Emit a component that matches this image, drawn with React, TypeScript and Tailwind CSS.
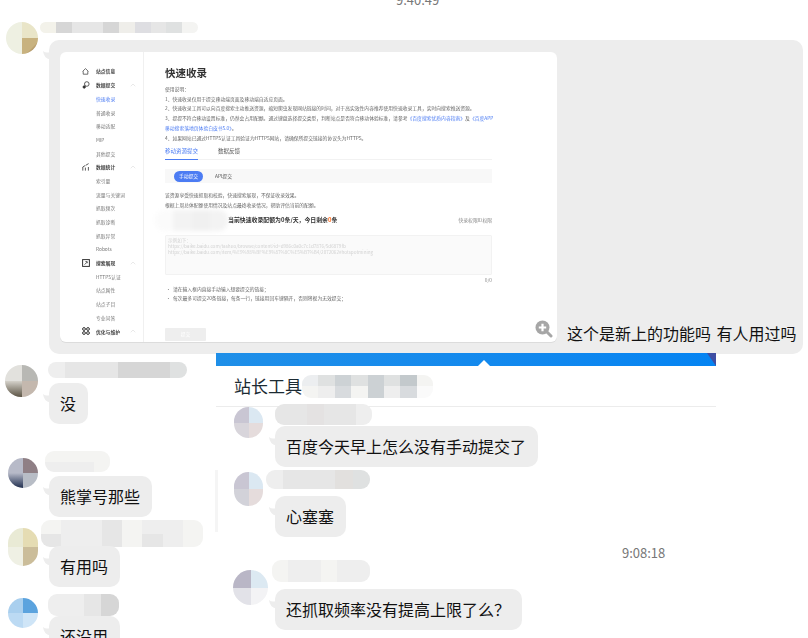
import { ChevronUp } from "lucide-react"

const FONT = "font-['Noto_Sans_CJK_SC','Noto_Sans',sans-serif]"

// fullwidth punctuation of the original copy
const C = "\uFF0C"
const SEMI = "\uFF1B"
const COLON = "\uFF1A"
const ASK = "\uFF1F"

// pixelated strip that hides a name
function Mosaic({ rows, className }: { rows: string[][]; className: string }) {
  return (
    <div className={`flex flex-col overflow-hidden rounded-[9px] ${className}`}>
      {rows.map((row, i) => (
        <div key={i} className="flex flex-1">
          {row.map((c, j) => (
            <div key={j} className={`flex-1 ${c}`} />
          ))}
        </div>
      ))}
    </div>
  )
}

function Avatar({ cells, className }: { cells: string[]; className: string }) {
  return (
    <div className={`grid grid-cols-2 grid-rows-2 overflow-hidden rounded-full ${className}`}>
      {cells.map((c, i) => (
        <div key={i} className={c} />
      ))}
    </div>
  )
}

function Tail() {
  return (
    <svg width="7" height="9" viewBox="0 0 7 9" className="absolute -left-[6px] top-[11px]">
      <path d="M0 0 Q3 2.5 7 1 L7 8.5 Q1 7.5 0 0Z" fill="#ededed" />
    </svg>
  )
}

function Bubble({ text, className = "" }: { text: string; className?: string }) {
  return (
    <div className={`relative w-fit whitespace-nowrap rounded-[10px] bg-[#ededed] py-[9px] pl-[11px] pr-[12px] text-[16px] leading-[23px] text-[#111] ${className}`}>
      <Tail />
      {text}
    </div>
  )
}

function Msg({
  avatar,
  name,
  text,
  col,
  gap,
  className,
}: {
  avatar: React.ReactNode
  name: React.ReactNode
  text: string
  col: string
  gap: string
  className: string
}) {
  return (
    <div className={`flex ${className}`}>
      <div className={`shrink-0 ${col}`}>{avatar}</div>
      <div>
        {name}
        <Bubble text={text} className={gap} />
      </div>
    </div>
  )
}

const g1 = "bg-[#e6e6e6]"
const g2 = "bg-[#d6d6d6]"
const g3 = "bg-[#eeeeee]"
const g4 = "bg-[#f4f4f2]"
const g5 = "bg-[#dfe1e1]"

function SideGroup({ icon, label }: { icon: React.ReactNode; label: string }) {
  return (
    <div className="flex h-[13.7px] items-center pl-[22px] pr-[6px] font-bold text-[#444]">
      <span className="flex w-[14px] shrink-0 items-center">{icon}</span>
      <span>{label}</span>
      {label !== "站点信息" && <ChevronUp size={8} strokeWidth={0.8} className="ml-auto text-[#aaa]" />}
    </div>
  )
}

function SideItem({ label, active }: { label: string; active?: boolean }) {
  return (
    <div className={`flex h-[13.7px] items-center pl-[36px] ${active ? "text-[#4c7cf3]" : "text-[#777]"}`}>{label}</div>
  )
}

function HouseIcon() {
  return (
    <svg width="7" height="7" viewBox="0 0 7 7" fill="none" stroke="#333" strokeWidth="0.7">
      <path d="M0.6 3.4 L3.5 0.6 L6.4 3.4 M1.2 3.2 V6.2 H5.8 V3.2" />
    </svg>
  )
}

function SubmitIcon() {
  return (
    <svg width="8" height="8" viewBox="0 0 8 8" fill="none" stroke="#333" strokeWidth="0.8">
      <circle cx="4.8" cy="3" r="2.3" />
      <circle cx="2.2" cy="6" r="1.2" fill="#333" />
    </svg>
  )
}

function StatsIcon() {
  return (
    <svg width="8" height="8" viewBox="0 0 8 8" fill="none" stroke="#333" strokeWidth="0.8">
      <path d="M0.8 7.6 V4 L3 2.6 M3.4 7.6 V4.6 M6.4 7.6 V4 M3.6 2.4 L6.6 0.6" />
    </svg>
  )
}

function SearchIcon() {
  return (
    <svg width="8" height="8" viewBox="0 0 8 8" fill="none" stroke="#333" strokeWidth="1">
      <rect x="0.6" y="0.6" width="6.8" height="6.8" />
      <path d="M2.6 5.6 L5 3.2 M3.4 2.6 H5.2 V4.2" strokeWidth="0.8" />
    </svg>
  )
}

function RingsIcon() {
  return (
    <svg width="8" height="8" viewBox="0 0 8 8" fill="none" stroke="#333" strokeWidth="1">
      <circle cx="2" cy="2" r="1.4" />
      <circle cx="6" cy="2" r="1.4" />
      <circle cx="2" cy="6" r="1.4" />
      <circle cx="6" cy="6" r="1.4" />
    </svg>
  )
}

function Shot() {
  return (
    <div className="relative flex h-[290px] w-[497px] shrink-0 overflow-hidden rounded-[6px] bg-white text-[4.8px] leading-[9.7px] shadow-[0_1px_0_#dcdcdc]">
      {/* site sidebar */}
      <div className="w-[84px] shrink-0 border-r border-[#f0f0f0] pt-[12.5px] blur-[0.3px]">
        <SideGroup icon={<HouseIcon />} label="站点信息" />
        <SideGroup icon={<SubmitIcon />} label="数据提交" />
        <SideItem label="快速收录" active />
        <SideItem label="普通收录" />
        <SideItem label="移动适配" />
        <SideItem label="MIP" />
        <SideItem label="其他提交" />
        <SideGroup icon={<StatsIcon />} label="数据统计" />
        <SideItem label="索引量" />
        <SideItem label="流量与关键词" />
        <SideItem label="抓取频次" />
        <SideItem label="抓取诊断" />
        <SideItem label="抓取异常" />
        <SideItem label="Robots" />
        <SideGroup icon={<SearchIcon />} label="搜索展现" />
        <SideItem label="HTTPS认证" />
        <SideItem label="站点属性" />
        <SideItem label="站点子目" />
        <SideItem label="专业问答" />
        <SideGroup icon={<RingsIcon />} label="优化与维护" />
      </div>

      {/* page body */}
      <div className="ml-[21px] w-[327px] shrink-0 whitespace-nowrap pt-[14px] text-[#666] blur-[0.3px]">
        <div className="text-[10.5px] font-bold leading-[14px] text-[#333]">快速收录</div>
        <div className="mt-[4px] text-[4.8px]">
          <div>{`使用说明${COLON}`}</div>
          <div>1、快速收录仅用于提交移动端页面及移动端自适应页面。</div>
          <div>{`2、快速收录工具可以向百度搜索主动推送资源${C}缩短爬虫发现网站链接的时间${C}对于高实效性内容推荐使用快速收录工具${C}实时向搜索推送资源。`}</div>
          <div>
            {`3、提提不符合移动设置标准${C}仍然会占用配额。通过键盘选择提交类型${C}判断站点是否符合移动体验标准${C}请参考`}
            <span className="text-[#4c7cf3]">《百度搜索优质内容指南》</span>及<span className="text-[#4c7cf3]">《百度APP</span>
          </div>
          <div>
            <span className="text-[#4c7cf3]">移动搜索落地页体验白皮书5.0》</span>。
          </div>
          <div>{`4、如果网站已通过HTTPS认证工具验证为HTTPS网站${C}请确保所提交链接的协议头为HTTPS。`}</div>
        </div>
        <div className="mt-[3px] flex h-[15px] items-stretch gap-[20px] border-b border-[#f2f2f2] text-[5.5px]">
          <span className="-mb-px flex items-center border-b border-[#4c7cf3] text-[#4c7cf3]">移动资源提交</span>
          <span className="flex items-center text-[#555]">数据反馈</span>
        </div>
        <div className="mt-[9px] flex h-[14px] items-center gap-[12px] bg-[#f8f8f8] pl-[9px]">
          <span className="flex h-[11px] w-[29px] items-center justify-center rounded-full bg-[#4c7cf3] text-white">手动提交</span>
          <span className="text-[#555]">API提交</span>
        </div>
        <div className="mt-[7px] text-[4.8px]">
          <div>{`该资源享受快速抓取和校验${C}快速搜索展现${C}不保证收录效果。`}</div>
          <div>{`根据上周总体配额使用情况及站点最终收录情况${C}帮助评估当前的配额。`}</div>
        </div>
        <div className="flex h-[21px] items-center">
          <Mosaic
            rows={[["bg-[#fbfbfb]", "bg-[#f3f3f3]", "bg-[#f0f0f0]", "bg-[#f3f3f3]"]]}
            className="-ml-[10px] h-[21px] w-[73px] shrink-0 blur-[2px]"
          />
          <span className="text-[5.9px] font-bold text-[#333]">
            {`当前快速收录配额为0条/天${C}今日剩余`}<span className="text-[#ff6a1a]">0</span>条
          </span>
          <span className="ml-auto text-[#888]">快录权限ID权限</span>
        </div>
        <div className="mt-[4px] h-[40px] rounded-[1px] border border-[#f2f2f2] bg-[#fafafa] px-[2px] pt-[1.5px] text-[4.6px] leading-[6px] text-[#d2d2d2]">
          <div>{`示例如下${COLON}`}</div>
          <div>https://baike.baidu.com/tashuo/browse/content?id=d986c0a0c7c1d7876/5d6879fb</div>
          <div>https://baike.baidu.com/item/%E9%98%BF%E9%87%8C%E5%B7%B4/2072062#hotspotmining</div>
        </div>
        <div className="h-[9px] text-right leading-[9px] text-[#888]">0/0</div>
        <div className="text-[4.8px] leading-[9.5px]">
          <div className="pl-[1px]">{`•\u00a0\u00a0请在输入框内直接手动输入想要提交的链接${SEMI}`}</div>
          <div className="pl-[1px]">{`•\u00a0\u00a0每次最多可提交20条链接${C}每条一行${C}链接用回车键隔开${C}否则将视为无效提交${SEMI}`}</div>
        </div>
        <div className="mt-[25px] flex h-[13px] w-[41px] items-center justify-center rounded-[1px] bg-[#eeeeee] text-white">提交</div>
      </div>

      {/* zoom badge of the chat client */}
      <svg width="18" height="18" viewBox="0 0 18 18" className="absolute bottom-[4px] right-[4px]">
        <path d="M11.5 11.5 L16 16" stroke="#a6a6a6" strokeWidth="3" strokeLinecap="round" />
        <circle cx="7.5" cy="7.5" r="7" fill="#a6a6a6" />
        <path d="M7.5 3.8 V11.2 M3.8 7.5 H11.2" stroke="#fff" strokeWidth="2.2" />
      </svg>
    </div>
  )
}

export default function App() {
  return (
    <div className={`relative h-[638px] w-[808px] overflow-hidden bg-white ${FONT}`}>
      <div className="h-[8px] overflow-hidden pl-[396px]">
        <div className="-mt-[8px] text-[13px] leading-[16px] text-[#777]">9:40:49</div>
      </div>

      {/* first message, with the pasted page */}
      <div className="mt-[14px] flex">
        <div className="w-[49px] shrink-0">
          <Avatar
            cells={["bg-[#eef0e2]", "bg-[#e9e5c8]", "bg-[#eef0e2]", "bg-gradient-to-br from-[#c8b27f] from-60% to-[#6e4210]"]}
            className="ml-[6px] h-[32px] w-[32px]"
          />
        </div>
        <div>
          <Mosaic
            rows={[["bg-[#f3f2ea]", g2, g1, g1, g2, "bg-[#efeeea]", "bg-[#dedee2]", g1, g5, g4]]}
            className="-ml-[9px] h-[11px] w-[158px]"
          />
          <div className="relative mt-[7px] flex h-[314px] w-[754px] items-end rounded-[10px] bg-[#ededed] pb-[12px] pl-[11px]">
            <Tail />
            <Shot />
            <div className="mb-[-3px] ml-[10px] whitespace-nowrap text-[16px] leading-[23px] text-[#111] [word-spacing:2px]">这个是新上的功能吗 有人用过吗</div>
          </div>
        </div>
      </div>

      <div className="relative -mt-px flex">
        {/* left conversation */}
        <div className="w-[216px] shrink-0">
          <Msg
            col="w-[49px]"
            className="mt-[9px]"
            gap="mt-[5px]"
            text="没"
            avatar={<Avatar cells={["bg-[#e2e1dd]", "bg-[#b8b8b4]", "bg-gradient-to-b from-[#d5d2cb] to-[#5d5546]", "bg-[#c4b8ae]"]} className="ml-[5px] mt-[3px] h-[32px] w-[33px]" />}
            name={<Mosaic rows={[[g3, g1, g1, g1, g2, g2, g2, g5]]} className="-ml-px h-[16px] w-[139px]" />}
          />
          <Msg
            col="w-[49px]"
            className="mt-[27px]"
            gap="mt-[4px]"
            text="熊掌号那些"
            avatar={<Avatar cells={["bg-[#b7bac8]", "bg-[#8f7f85]", "bg-gradient-to-b from-[#b7bac8] to-[#23304f]", "bg-[#b8bdc6]"]} className="ml-[8px] mt-[7px] h-[30px] w-[30px]" />}
            name={<Mosaic rows={[[g4, g4, g4, g4], [g3, g3, g3, g4]]} className="-ml-[4px] h-[21px] w-[65px]" />}
          />
          <Msg
            col="w-[49px]"
            className="mt-[3px]"
            gap="-mt-[1px]"
            text="有用吗"
            avatar={<Avatar cells={["bg-[#e9ead5]", "bg-[#e5dcb3]", "bg-[#eff0e4]", "bg-[#cbbd9a]"]} className="ml-[8px] mt-[8px] h-[38px] w-[30px]" />}
            name={<Mosaic rows={[[g4, g3, g3, g1, g4, g3, g3, g4], [g1, g3, g3, g1, g4, g1, g3, g4]]} className="-ml-[8px] h-[27px] w-[162px]" />}
          />
          <Msg
            col="w-[49px]"
            className="mt-[7px]"
            gap=""
            text="还没用"
            avatar={<Avatar cells={["bg-[#a9cfee]", "bg-[#5ba3de]", "bg-[#bcdaf3]", "bg-[#cfe5f7]"]} className="ml-[8px] mt-[4px] h-[30px] w-[30px]" />}
            name={<Mosaic rows={[[g3, g3, g1, g2]]} className="-ml-px h-[22px] w-[71px]" />}
          />
        </div>

        {/* pasted chat window */}
        <div className="relative w-[500px] shrink-0">
          <div className="absolute -left-px top-[117px] h-[62px] w-[3px] bg-[#f5f5f5]" />
          <div className="relative h-[13px] bg-gradient-to-r from-[#1f8fe8] to-[#0584f2]">
            <svg width="12" height="6" viewBox="0 0 12 6" className="absolute bottom-0 left-[262px]">
              <path d="M0 6 L6 0 L12 6Z" fill="#fff" />
            </svg>
            <svg width="9" height="13" viewBox="0 0 9 13" className="absolute right-0 top-0">
              <path d="M0 0 H9 V13Z" fill="#3f4ea3" />
            </svg>
          </div>
          <div className="flex h-[41px] items-center border-b border-[#ececec] pl-[18px]">
            <span className="text-[17px] text-[#1c2b33]">站长工具</span>
            <Mosaic
              rows={[["bg-[#eceef0]", g5, "bg-[#cdd2d5]", g5, "bg-[#ccd1d4]", g5, "bg-[#c3c9cc]", g4], [g4, g3, "bg-[#d8dbde]", g4, "bg-[#ccd1d4]", g3, "bg-[#d8dbde]", "bg-[#fafafa]"]]}
              className="h-[23px] w-[131px]"
            />
          </div>
          <Msg
            col="w-[59px]"
            className="-mt-[3px]"
            gap="mt-px"
            text="百度今天早上怎么没有手动提交了"
            avatar={<Avatar cells={["bg-[#c9c6d3]", "bg-[#dbe8f2]", "bg-[#d8d5db]", "bg-[#e5dcdc]"]} className="ml-[18px] mt-[3px] h-[31px] w-[29px]" />}
            name={<Mosaic rows={[[g1, g1, "bg-[#e4e2e2]", g1, g1, g3]]} className="h-[21px] w-[97px]" />}
          />
          <Msg
            col="w-[59px]"
            className="mt-[3px]"
            gap="mt-[7px]"
            text="心塞塞"
            avatar={<Avatar cells={["bg-[#c9c6d3]", "bg-[#dbe8f2]", "bg-[#d2d2d9]", "bg-[#e5dcdc]"]} className="ml-[18px] mt-[2px] h-[34px] w-[29px]" />}
            name={<Mosaic rows={[[g3, g1, g1, g1, "bg-[#e2e0de]", g5]]} className="-ml-[9px] h-[19px] w-[104px]" />}
          />
          <div className="mt-[7px] h-[18px] pl-[406px] text-[13px] leading-[18px] text-[#777]">9:08:18</div>
          <Msg
            col="w-[59px]"
            className="-mt-[2px]"
            gap="mt-[7px]"
            text={`还抓取频率没有提高上限了么${ASK}`}
            avatar={<Avatar cells={["bg-[#b9b6c6]", "bg-[#dce9f2]", "bg-[#e2e2e8]", "bg-[#f3f3f5]"]} className="ml-[17px] mt-[10px] h-[35px] w-[35px]" />}
            name={<Mosaic rows={[[g4, g3, g3, g4, g3, g3]]} className="-ml-[3px] h-[22px] w-[98px]" />}
          />
        </div>
      </div>
    </div>
  )
}
